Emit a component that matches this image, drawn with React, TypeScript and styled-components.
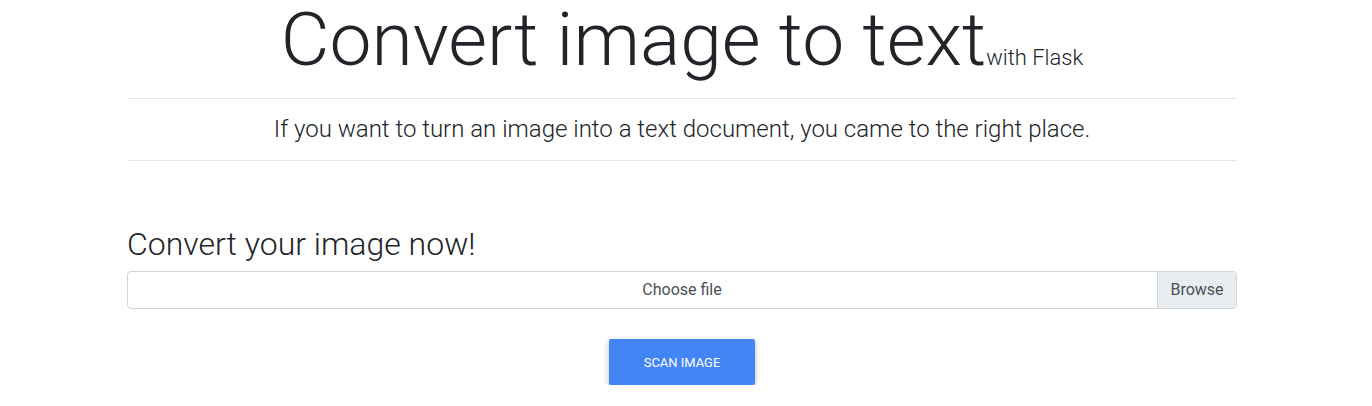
import styled, { createGlobalStyle } from 'styled-components';

const GlobalStyle = createGlobalStyle`
  body {
    margin: 0;
    padding-right: 8px;
    font-family: Roboto, "Liberation Sans", sans-serif;
    font-size: 16px;
    line-height: 1.5;
    color: #212529;
    background: #fff;
  }
`;

const Container = styled.main`
  max-width: 1110px;
  margin: 0 auto;
`;

const Title = styled.h1`
  margin: 0 0 21px;
  padding-top: 2px;
  font-size: 75px;
  font-weight: 300;
  line-height: 1;
  text-align: center;
  color: #212529;

  & > small {
    font-size: 22px;
    font-weight: 300;
  }
`;

const Rule = styled.hr`
  margin: 16px 0;
  border: 0;
  border-top: 1px solid rgba(0, 0, 0, 0.1);
`;

const Lead = styled.p`
  margin: 0;
  font-size: 24px;
  font-weight: 300;
  line-height: 1.2;
  text-align: center;
`;

const Section = styled.section`
  margin-top: 64px;
`;

const SectionTitle = styled.h2`
  margin: 0 0 8px;
  font-size: 32px;
  font-weight: 300;
  line-height: 1.2;
`;

const FileField = styled.label`
  display: grid;
  grid-template-columns: 79px 1fr 79px;
  align-items: stretch;
  height: 38px;
  box-sizing: border-box;
  border: 1px solid #ced4da;
  border-radius: 4px;
  color: #495057;
  overflow: hidden;
  cursor: pointer;
`;

const FileText = styled.span`
  grid-column: 2;
  display: flex;
  align-items: center;
  justify-content: center;
`;

const Browse = styled.span`
  grid-column: 3;
  display: flex;
  align-items: center;
  justify-content: center;
  background: #e9ecef;
  border-left: 1px solid #ced4da;
`;

const Actions = styled.div`
  display: flex;
  justify-content: center;
  margin-top: 30px;
`;

const Button = styled.button`
  padding: 13.44px 34.24px;
  border: 0;
  border-radius: 2px;
  background: #4285f4;
  color: #fff;
  font-family: Roboto, "Liberation Sans", sans-serif;
  font-size: 12.96px;
  line-height: 1.5;
  text-transform: uppercase;
  box-shadow: 0 2px 5px 0 rgba(0, 0, 0, 0.16), 0 2px 10px 0 rgba(0, 0, 0, 0.12);
  cursor: pointer;
`;

export default function App() {
  return (
    <>
      <GlobalStyle />
      <Container>
        <Title>
          Convert image to text<small>with Flask</small>
        </Title>
        <Rule />
        <Lead>If you want to turn an image into a text document, you came to the right place.</Lead>
        <Rule />
        <Section>
          <SectionTitle>Convert your image now!</SectionTitle>
          <FileField>
            <FileText>Choose file</FileText>
            <Browse>Browse</Browse>
          </FileField>
          <Actions>
            <Button type="button">Scan image</Button>
          </Actions>
        </Section>
      </Container>
    </>
  );
}
